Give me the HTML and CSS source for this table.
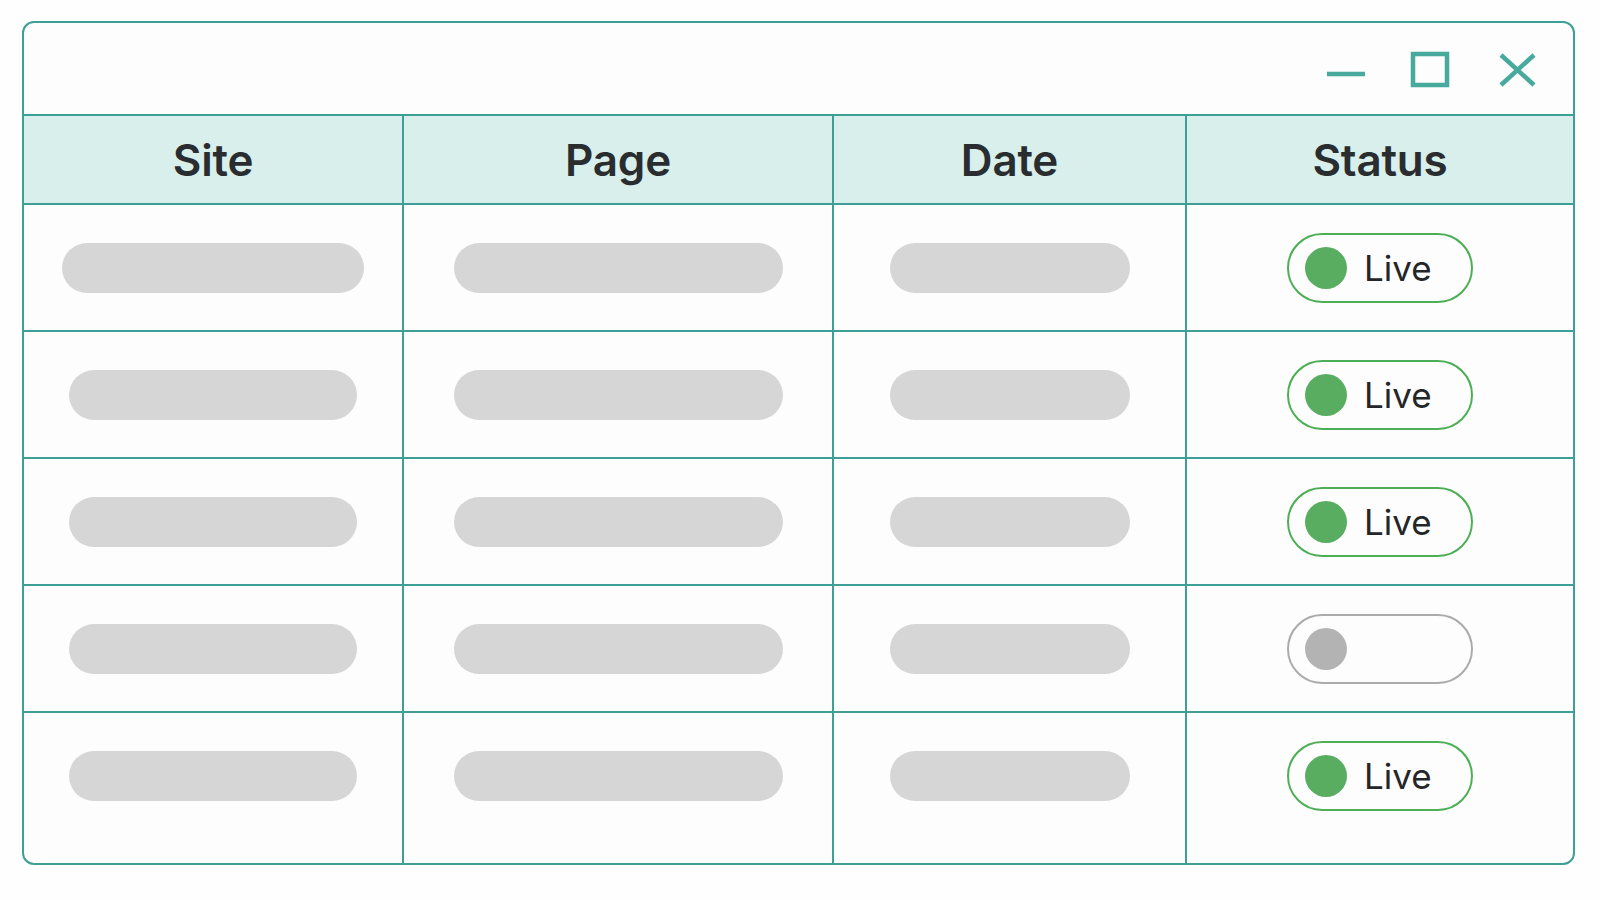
FILE: index.html
```html
<!DOCTYPE html>
<html lang="en">
<head>
<meta charset="utf-8">
<title>Pages</title>
<link rel="stylesheet" href="styles.css">
</head>
<body>
<div class="window">
  <div class="titlebar">
    <svg class="icon" width="40" height="40" viewBox="0 0 40 40" aria-label="Minimize">
      <line x1="1" y1="25" x2="39" y2="25" />
    </svg>
    <svg class="icon" width="40" height="40" viewBox="0 0 40 40" aria-label="Maximize">
      <rect x="3" y="5" width="34" height="31" />
    </svg>
    <svg class="icon" width="40" height="40" viewBox="0 0 40 40" aria-label="Close">
      <line x1="3" y1="6" x2="36" y2="36" />
      <line x1="36" y1="6" x2="3" y2="36" />
    </svg>
  </div>
  <div class="table">
    <div class="row head">
      <div class="cell">Site</div>
      <div class="cell">Page</div>
      <div class="cell">Date</div>
      <div class="cell">Status</div>
    </div>
    <div class="row">
      <div class="cell"><span class="bar bar-site-wide"></span></div>
      <div class="cell"><span class="bar bar-page"></span></div>
      <div class="cell"><span class="bar bar-date"></span></div>
      <div class="cell status"><span class="pill live"><span class="dot"></span>Live</span></div>
    </div>
    <div class="row">
      <div class="cell"><span class="bar bar-site"></span></div>
      <div class="cell"><span class="bar bar-page"></span></div>
      <div class="cell"><span class="bar bar-date"></span></div>
      <div class="cell status"><span class="pill live"><span class="dot"></span>Live</span></div>
    </div>
    <div class="row">
      <div class="cell"><span class="bar bar-site"></span></div>
      <div class="cell"><span class="bar bar-page"></span></div>
      <div class="cell"><span class="bar bar-date"></span></div>
      <div class="cell status"><span class="pill live"><span class="dot"></span>Live</span></div>
    </div>
    <div class="row">
      <div class="cell"><span class="bar bar-site"></span></div>
      <div class="cell"><span class="bar bar-page"></span></div>
      <div class="cell"><span class="bar bar-date"></span></div>
      <div class="cell status"><span class="pill off"><span class="dot"></span></span></div>
    </div>
    <div class="row last">
      <div class="cell"><span class="bar bar-site"></span></div>
      <div class="cell"><span class="bar bar-page"></span></div>
      <div class="cell"><span class="bar bar-date"></span></div>
      <div class="cell status"><span class="pill live"><span class="dot"></span>Live</span></div>
    </div>
  </div>
</div>
</body>
</html>
```

FILE: styles.css
```css
* { box-sizing: border-box; }

html, body {
  margin: 0;
  padding: 0;
  background: #fefefe;
  font-family: Inter, "Noto Sans", sans-serif;
}

.window {
  margin: 21px 0 0 22px;
  width: 1553px;
  height: 844px;
  border: 2px solid #3e9f96;
  border-radius: 12px;
  background: #fdfdfd;
  display: flex;
  flex-direction: column;
  overflow: hidden;
}

.titlebar {
  height: 93px;
  flex: none;
  border-bottom: 2px solid #3e9f96;
  display: flex;
  justify-content: flex-end;
  align-items: center;
  gap: 44px;
  padding-right: 35px;
}

.titlebar .icon:last-child { margin-left: 4px; }

.icon {
  display: block;
  fill: none;
  stroke: #48a99d;
  stroke-width: 4.5;
}

.table {
  flex: 1;
  display: flex;
  flex-direction: column;
}

.row {
  display: grid;
  grid-template-columns: 380px 430px 353px 386px;
  height: 127px;
  flex: none;
  border-bottom: 2px solid #3e9f96;
}

.row.head {
  height: 89px;
  background: #d8efeb;
}

.row.last {
  flex: 1;
  border-bottom: none;
}

.cell {
  display: flex;
  justify-content: center;
  align-items: flex-start;
  padding-top: 38px;
  border-right: 2px solid #3e9f96;
}

.cell:last-child { border-right: none; }

.head .cell {
  align-items: center;
  padding-top: 0;
  font-size: 44px;
  font-weight: 600;
  color: #2a2d2f;
  letter-spacing: -0.2px;
}

.cell.status { padding-top: 28px; }

.bar {
  display: block;
  height: 50px;
  border-radius: 25px;
  background: #d6d6d6;
}

.bar-site { width: 288px; }
.bar-site-wide { width: 302px; }
.bar-page { width: 329px; }
.bar-date { width: 240px; }

.pill {
  display: flex;
  align-items: center;
  width: 186px;
  height: 70px;
  border-radius: 35px;
  border: 2px solid #4caf55;
  padding-left: 16px;
  gap: 17px;
  font-size: 35px;
  font-weight: 400;
  color: #242628;
}

.dot {
  width: 42px;
  height: 42px;
  border-radius: 50%;
  background: #58ad60;
  flex: none;
}

.pill.off { border-color: #ababab; }
.pill.off .dot { background: #b3b3b3; }
```
